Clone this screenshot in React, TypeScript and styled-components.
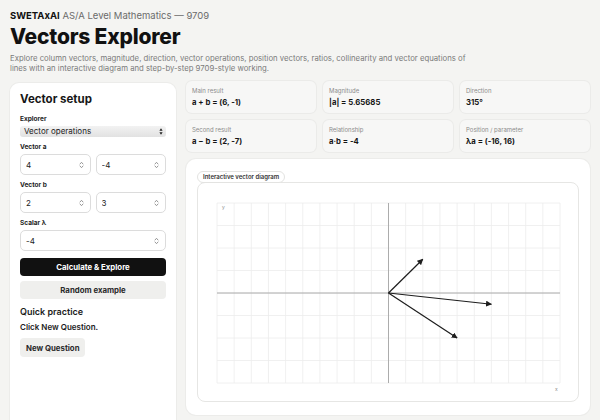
import React from "react";
import styled, { createGlobalStyle } from "styled-components";

const Global = createGlobalStyle`
  html, body { margin: 0; padding: 0; }
  body {
    background: #f4f4f2;
    font-family: Inter, "Noto Sans", "Liberation Sans", sans-serif;
    color: #161616;
    -webkit-font-smoothing: antialiased;
  }
  * { box-sizing: border-box; }
`;

const Page = styled.div`
  width: 600px;
  height: 420px;
  overflow: hidden;
  padding: 10px 10px 0 10px;
`;

const Brand = styled.div`
  font-size: 9.5px;
  line-height: 12px;
  color: #6b6b6b;
  b { color: #111; font-weight: 700; }
`;

const Title = styled.h1`
  margin: 2px 0 0 0;
  font-size: 21px;
  line-height: 26px;
  font-weight: 800;
  letter-spacing: -0.2px;
  color: #111;
`;

const Lead = styled.p`
  margin: 3px 0 0 0;
  max-width: 470px;
  font-size: 7.75px;
  line-height: 10px;
  color: #7a7a7a;
`;

const Main = styled.div`
  display: grid;
  grid-template-columns: 166px 1fr;
  gap: 10px;
  margin-top: 8px;
  align-items: start;
`;

const SetupCard = styled.section`
  margin-top: 2px;
  height: 360px;
  background: #fff;
  border-radius: 9px;
  box-shadow: 0 0 0 1px #ececea;
  padding: 9px 10px;
  display: flex;
  flex-direction: column;
`;

const CardTitle = styled.h2`
  margin: 0;
  font-size: 11.5px;
  line-height: 14px;
  font-weight: 700;
`;

const Field = styled.div<{ $gap?: number }>`
  margin-top: ${(p) => p.$gap ?? 6}px;
  display: flex;
  flex-direction: column;
`;

const Label = styled.label`
  font-size: 6.5px;
  line-height: 8px;
  font-weight: 700;
  color: #222;
  margin-bottom: 3px;
`;

const SelectBox = styled.div`
  height: 11px;
  display: flex;
  align-items: center;
  justify-content: space-between;
  padding: 0 3px 0 4px;
  border-radius: 3px;
  background: linear-gradient(#f2f2f2, #e2e2e2);
  font-size: 8px;
  line-height: 11px;
  color: #1c1c1c;
`;

const Pair = styled.div`
  display: grid;
  grid-template-columns: minmax(0, 1fr) minmax(0, 1fr);
  gap: 5px;
`;

const InputBox = styled.div`
  height: 21px;
  display: flex;
  align-items: center;
  padding: 0 6px 0 5px;
  border: 1px solid #dcdcdc;
  border-radius: 5px;
  background: #fff;
`;

const Input = styled.input`
  flex: 1;
  width: 0;
  min-width: 0;
  border: 0;
  outline: 0;
  padding: 0;
  background: transparent;
  font-family: inherit;
  font-size: 8px;
  color: #222;
`;

const Spin = () => (
  <svg width="5" height="8" viewBox="0 0 5 8" fill="none" stroke="#8a8a8a" strokeWidth="0.9" strokeLinecap="round" strokeLinejoin="round">
    <path d="M1 3 L2.5 1.3 L4 3" />
    <path d="M1 5 L2.5 6.7 L4 5" />
  </svg>
);

const NumberField = ({ value }: { value: string }) => (
  <InputBox>
    <Input defaultValue={value} />
    <Spin />
  </InputBox>
);

const Button = styled.button<{ $dark?: boolean; $wide?: boolean }>`
  height: ${(p) => (p.$wide ? 18 : 19)}px;
  width: ${(p) => (p.$wide ? "100%" : "auto")};
  align-self: ${(p) => (p.$wide ? "stretch" : "flex-start")};
  padding: 0 ${(p) => (p.$wide ? 0 : 6)}px;
  border: 0;
  border-radius: 4px;
  background: ${(p) => (p.$dark ? "#111" : "#efefed")};
  color: ${(p) => (p.$dark ? "#fff" : "#2a2a2a")};
  font-family: inherit;
  font-size: 7.8px;
  font-weight: 700;
`;

const Section = styled.h3`
  margin: 7px 0 0 0;
  font-size: 9px;
  line-height: 12px;
  font-weight: 600;
  color: #1b1b1b;
`;

const Note = styled.p`
  margin: 4px 0 0 0;
  font-size: 8px;
  line-height: 10px;
  font-weight: 600;
  color: #1b1b1b;
`;

const RightCol = styled.div`
  display: flex;
  flex-direction: column;
  gap: 7px;
`;

const Stats = styled.div`
  display: grid;
  grid-template-columns: repeat(3, 1fr);
  gap: 7px;
`;

const Stat = styled.div`
  height: 32px;
  padding: 6px 6px 0 6px;
  border-radius: 6px;
  background: #f7f7f6;
  box-shadow: 0 0 0 1px #ebebe9;
`;

const StatLabel = styled.div`
  font-size: 6px;
  line-height: 8px;
  color: #8c8c8c;
`;

const StatValue = styled.div`
  margin-top: 2px;
  font-size: 7.75px;
  line-height: 11px;
  font-weight: 700;
  color: #151515;
`;

const DiagramCard = styled.section`
  height: 256px;
  background: #fff;
  border-radius: 10px;
  box-shadow: 0 0 0 1px #ececea;
  padding: 12px 11px;
  display: flex;
  flex-direction: column;
`;

const Pill = styled.span`
  align-self: flex-start;
  height: 12px;
  margin-bottom: -1px;
  padding: 0 5px;
  border: 1px solid #e3e3e1;
  border-radius: 7px;
  font-size: 6px;
  line-height: 10px;
  font-weight: 600;
  color: #333;
  background: #fff;
  position: relative;
  z-index: 1;
`;

const Frame = styled.div`
  height: 220px;
  border: 1px solid #e6e6e4;
  border-radius: 8px;
  overflow: hidden;
`;

const GX = 19;
const GY = 20;
const COLS = 20;
const ROWS = 8;
const GW = 343;
const GH = 180;
const cw = GW / COLS;
const rh = GH / ROWS;
const ox = GX + GW / 2;
const oy = GY + GH / 2;
const sx = cw;
const sy = GH / 16;

const vectors: [number, number][] = [
  [4, -4],
  [2, 3],
  [6, -1],
];

const Diagram = () => {
  const v = Array.from({ length: COLS + 1 }, (_, i) => GX + i * cw);
  const h = Array.from({ length: ROWS + 1 }, (_, i) => GY + i * rh);
  return (
    <svg width="380" height="218" viewBox="0 0 380 218">
      <defs>
        <marker id="head" viewBox="0 0 10 10" refX="9" refY="5" markerWidth="5" markerHeight="5" orient="auto">
          <path d="M0 0 L10 5 L0 10 z" fill="#1d1d1d" />
        </marker>
      </defs>
      {v.map((x, i) => (
        <line key={"v" + i} x1={x} y1={GY} x2={x} y2={GY + GH} stroke="#ececec" strokeWidth="0.8" />
      ))}
      {h.map((y, i) => (
        <line key={"h" + i} x1={GX} y1={y} x2={GX + GW} y2={y} stroke="#ececec" strokeWidth="0.8" />
      ))}
      <line x1={ox} y1={GY} x2={ox} y2={GY + GH} stroke="#9a9a9a" strokeWidth="0.8" />
      <line x1={GX} y1={oy} x2={GX + GW} y2={oy} stroke="#9a9a9a" strokeWidth="0.8" />
      <text x={GX + 5} y={GY + 6} fontSize="5" fill="#8a8a8a" fontFamily="Inter, sans-serif">y</text>
      <text x={GX + GW - 5} y={GY + GH + 8} fontSize="5" fill="#8a8a8a" fontFamily="Inter, sans-serif">x</text>
      {vectors.map(([a, b], i) => (
        <line
          key={i}
          x1={ox}
          y1={oy}
          x2={ox + a * sx}
          y2={oy - b * sy}
          stroke="#1d1d1d"
          strokeWidth="1.2"
          markerEnd="url(#head)"
        />
      ))}
    </svg>
  );
};

const stats = [
  { label: "Main result", value: "a + b = (6, -1)" },
  { label: "Magnitude", value: "|a| = 5.65685" },
  { label: "Direction", value: "315°" },
  { label: "Second result", value: "a − b = (2, -7)" },
  { label: "Relationship", value: "a·b = -4" },
  { label: "Position / parameter", value: "λa = (-16, 16)" },
];

export default function App() {
  return (
    <>
      <Global />
      <Page>
        <Brand>
          <b>SWETAxAI</b> AS/A Level Mathematics — 9709
        </Brand>
        <Title>Vectors Explorer</Title>
        <Lead>
          Explore column vectors, magnitude, direction, vector operations, position vectors, ratios, collinearity and vector equations of lines with an interactive diagram and step-by-step 9709-style working.
        </Lead>
        <Main>
          <SetupCard>
            <CardTitle>Vector setup</CardTitle>
            <Field $gap={9}>
              <Label>Explorer</Label>
              <SelectBox>
                <span>Vector operations</span>
                <svg width="4" height="7" viewBox="0 0 4 7">
                  <path d="M2 0.3 L3.6 2.8 L0.4 2.8 z" fill="#222" />
                  <path d="M2 6.7 L3.6 4.2 L0.4 4.2 z" fill="#222" />
                </svg>
              </SelectBox>
            </Field>
            <Field>
              <Label>Vector a</Label>
              <Pair>
                <NumberField value="4" />
                <NumberField value="-4" />
              </Pair>
            </Field>
            <Field>
              <Label>Vector b</Label>
              <Pair>
                <NumberField value="2" />
                <NumberField value="3" />
              </Pair>
            </Field>
            <Field>
              <Label>Scalar λ</Label>
              <NumberField value="-4" />
            </Field>
            <Field $gap={7}>
              <Button $dark $wide>Calculate &amp; Explore</Button>
            </Field>
            <Field $gap={5}>
              <Button $wide>Random example</Button>
            </Field>
            <Section>Quick practice</Section>
            <Note>Click New Question.</Note>
            <Field $gap={6}>
              <Button>New Question</Button>
            </Field>
          </SetupCard>
          <RightCol>
            <Stats>
              {stats.map((s) => (
                <Stat key={s.label}>
                  <StatLabel>{s.label}</StatLabel>
                  <StatValue>{s.value}</StatValue>
                </Stat>
              ))}
            </Stats>
            <DiagramCard>
              <Pill>Interactive vector diagram</Pill>
              <Frame>
                <Diagram />
              </Frame>
            </DiagramCard>
          </RightCol>
        </Main>
      </Page>
    </>
  );
}
